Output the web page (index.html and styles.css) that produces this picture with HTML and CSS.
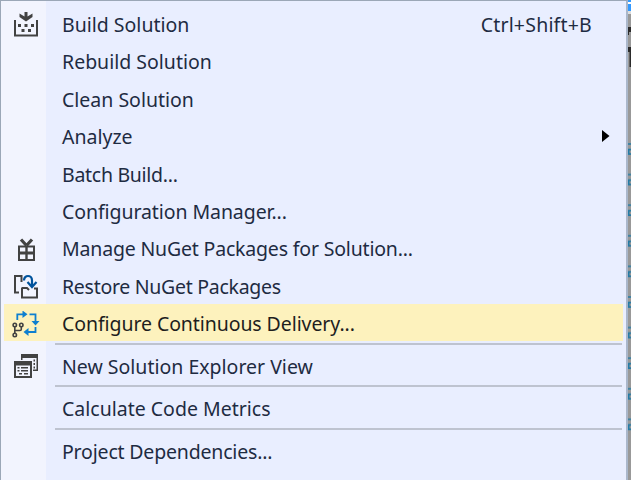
FILE: index.html
```html
<!DOCTYPE html>
<html lang="en">
<head>
<meta charset="utf-8">
<title>Build menu</title>
<link rel="stylesheet" href="styles.css">
</head>
<body>
<div class="screen">
<ul class="menu">
  <li class="item"><span class="icon"><svg width="28" height="28" viewBox="0 0 28 28"><path d="M3 8v15.500h22V8" fill="none" stroke="#424242" stroke-width="2"/><path d="M12.500 0h3v4.500l5-3v3.500L14 9.500 7.500 5V1.500l5 3z M6 12h3v3h-3z M12.500 12h3v3h-3z M19 12h3v3h-3z M9.500 17h3v3h-3z M16 17h3v3h-3z" fill="#424242"/></svg></span><span class="label">Build Solution</span><span class="key">Ctrl+Shift+B</span></li>
  <li class="item"><span class="icon"></span><span class="label">Rebuild Solution</span></li>
  <li class="item"><span class="icon"></span><span class="label">Clean Solution</span></li>
  <li class="item"><span class="icon"></span><span class="label">Analyze</span><svg class="arrow" width="8" height="12" viewBox="0 0 8 12"><path d="M0 0l7.500 6-7.500 6z"/></svg></li>
  <li class="item"><span class="icon"></span><span class="label tightest">Batch Build...</span></li>
  <li class="item"><span class="icon"></span><span class="label snug">Configuration Manager...</span></li>
  <li class="item"><span class="icon"><svg width="28" height="28" viewBox="0 0 28 28"><path d="M6 8.500h17v15.500h-17z" fill="#424242"/><path d="M8 10.500h5.300v4h-5.300z M15.700 10.500h5.300v4h-5.300z M8 17.500h5.300v4.500h-5.300z M15.700 17.500h5.300v4.500h-5.300z" fill="#f2f4fe"/><path d="M14.500 8.500L9 2.500M14.500 8.500L20 2.500" stroke="#424242" stroke-width="3.200"/></svg></span><span class="label tight">Manage NuGet Packages for Solution...</span></li>
  <li class="item"><span class="icon"><svg width="28" height="28" viewBox="0 0 28 28"><path d="M7 18.500H3V2h6.500v6" fill="none" stroke="#424242" stroke-width="2"/><path d="M10 13.500v10h15V14.500h-3M10 14h5l2 2" fill="none" stroke="#424242" stroke-width="2"/><path d="M12 6.500c0-6 8-6 8 0v6M15.500 8l4.500 5 4.500-5" fill="none" stroke="#00539c" stroke-width="2.200"/></svg></span><span class="label tightest">Restore NuGet Packages</span></li>
  <li class="item selected"><span class="icon"><svg width="28" height="28" viewBox="0 0 28 28"><g fill="none" stroke="#0e7fd0" stroke-width="1.800"><path d="M5.300 9V3.300H12M17.500 3.300h6V12M23.500 16v5H15"/></g><path d="M10.500-.5l5 3.800-5 3.700zM19.500 10h8l-4 4.500zM16.500 17v8l-5-4z" fill="#0e7fd0"/><g fill="none" stroke="#424242" stroke-width="1.600"><circle cx="2.800" cy="14" r="1.700"/><circle cx="9.300" cy="14" r="1.700"/><circle cx="2.800" cy="24" r="1.700"/><path d="M2.800 15.700v6.600M9.300 15.700v2.500q0 1.300-1.300 1.300H2.800"/></g></svg></span><span class="label snug">Configure Continuous Delivery...</span></li>
  <li class="separator"></li>
  <li class="item"><span class="icon"><svg width="28" height="28" viewBox="0 0 28 28"><path d="M9 0h17v17h-5v-1.500h3.500V4h-14v2H9zM2 7h18v17h-18z" fill="#424242"/><path d="M4 11.500h14V22h-14z" fill="#f2f4fe"/><path d="M5.500 13h2v1.500h-2zM9 13h7v1.500h-7zM5.500 16h2v1.500h-2zM9 16h7v1.500h-7zM7 19h3v1.500h-3zM12 19h4v1.500h-4zM21.500 5.500h1.500v2h-1.500zM21.500 9h1.500v2h-1.500zM21.500 12.500h1.500v2h-1.500z" fill="#424242"/></svg></span><span class="label">New Solution Explorer View</span></li>
  <li class="separator"></li>
  <li class="item"><span class="icon"></span><span class="label">Calculate Code Metrics</span></li>
  <li class="separator"></li>
  <li class="item"><span class="icon"></span><span class="label tight">Project Dependencies...</span></li>
</ul>
<svg class="backdrop" width="3" height="480" viewBox="0 0 3 480">
  <defs><pattern id="lines" y="143" width="3" height="30.600" patternUnits="userSpaceOnUse"><path d="M0 1h3M3 6.500H.7v4.500H3" fill="none" stroke="#257ba5" stroke-width="1.600"/></pattern></defs>
  <path fill="#999" d="M0 0h3v480H0z"/><path fill="#fff" d="M0 0h3v4H0z"/><path fill="#3399ff" d="M0 0h3v2H0zM0 4h3v7H0z"/><path fill="#ddd" d="M0 11h3v3H0z"/>
  <path fill="#2b2b2b" d="M0 27h3v5H1v3H0zM0 47h3v5H0zM1.500 52H3v15H1.500z"/><path fill="url(#lines)" d="M0 143h3v293H0z"/>
</svg>
</div>
</body>
</html>
```
FILE: styles.css
```css
body {
  margin: 0;
  overflow: hidden;
}
.screen {
  display: flex;
  height: 480px;
}
.menu {
  box-sizing: border-box;
  flex: 1;
  height: 480px;
  margin: 0;
  padding: 3.600px 3px 0 3px;
  overflow: hidden;
  list-style: none;
  border: solid #9ba7b7;
  border-width: 1px 2px 0 1px;
  border-right-color: #aab7cb;
  background: linear-gradient(90deg, #f2f4fe 45px, #e9eeff 45px);
  color: #1e2b42;
  font: 19.5px/37.4px "Noto Sans", "Open Sans", sans-serif;
}
.item {
  display: flex;
  height: 37.4px;
  white-space: nowrap;
}
.icon {
  display: flex;
  flex: none;
  align-items: center;
  width: 50px;
  padding: 3px 0 0 8px;
  height: 37.4px;
}
.label,
.key {
  padding-top: 1.500px;
}
.snug {
  letter-spacing: -0.08px;
}
.tight {
  letter-spacing: -0.18px;
}
.tightest {
  letter-spacing: -0.28px;
}
.selected {
  background: #fdf2bd;
  color: #1e1e1e;
}
.key {
  margin-left: auto;
  margin-right: 31px;
  letter-spacing: 0.2px;
}
.arrow {
  margin: 13px 13.500px 0 auto;
}
.separator {
  height: 2px;
  margin: 1.500px 1px 1.600px 51px;
  background: #bec3d0;
}
.backdrop {
  flex: none;
}
```
